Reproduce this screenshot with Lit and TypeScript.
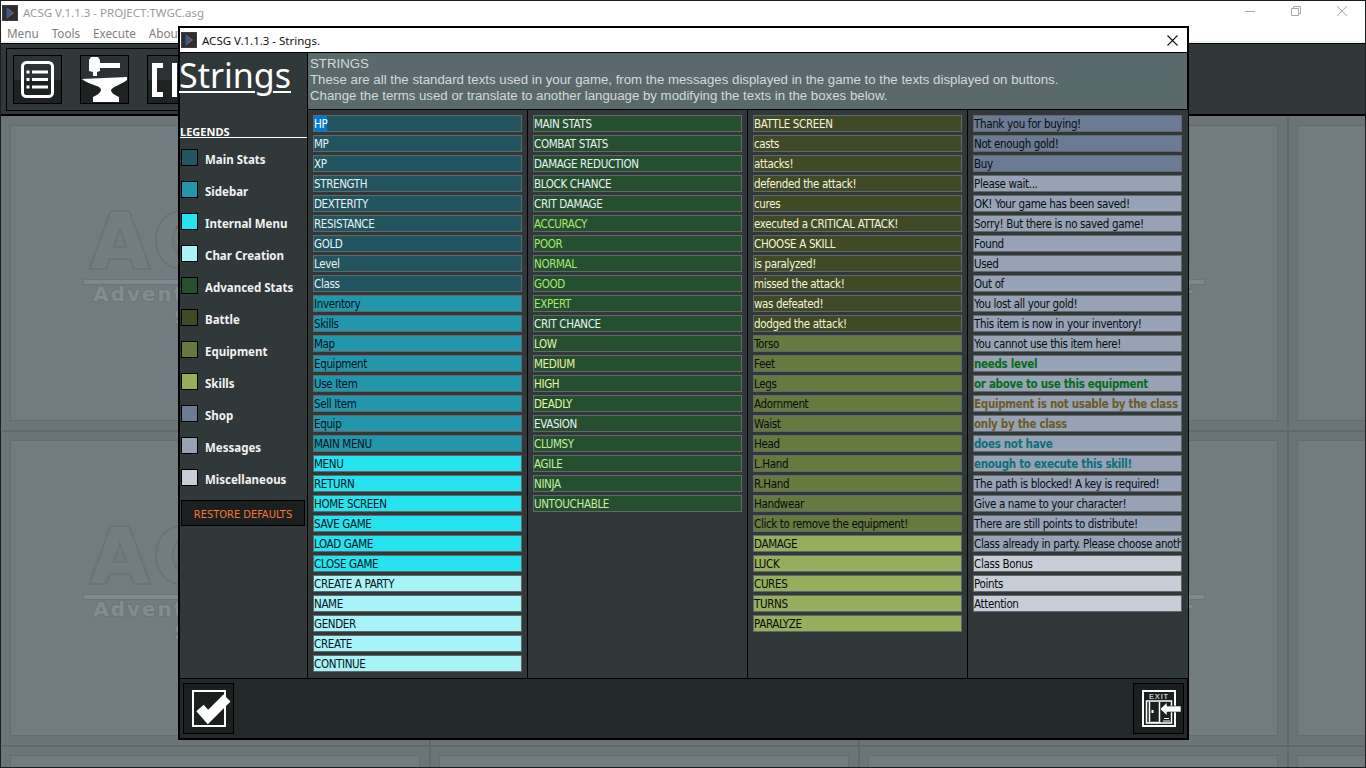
import { LitElement, html, css, svg } from "lit";
import { customElement } from "lit/decorators.js";

const C = {
  main: "#225560", side: "#2297ac", menu: "#25e3ef", char: "#a8f3f8",
  adv: "#264f30", battle: "#404a26", equip: "#66793e", skill: "#97ae5c",
  shop: "#6a7b93", msg: "#97a3b5", misc: "#c8ccd6",
};
type Row = [string, string, string, boolean?];
const W = "#e8f2f2", D = "#04131a", G = "#a6ea6e", Y = "#e2f7a8", P = "#f4f4dc", N = "#050d10";
const g = (items: string[], bg: string, fg: string, bold = false): Row[] => items.map((t) => [t, bg, fg, bold]);

const col1: Row[] = [
  ...g(["HP", "MP", "XP", "STRENGTH", "DEXTERITY", "RESISTANCE", "GOLD", "Level", "Class"], C.main, W),
  ...g(["Inventory", "Skills", "Map", "Equipment", "Use Item", "Sell Item", "Equip", "MAIN MENU"], C.side, D),
  ...g(["MENU", "RETURN", "HOME SCREEN", "SAVE GAME", "LOAD GAME", "CLOSE GAME"], C.menu, D),
  ...g(["CREATE A PARTY", "NAME", "GENDER", "CREATE", "CONTINUE"], C.char, D),
];
const col2: Row[] = [
  ...g(["MAIN STATS", "COMBAT STATS", "DAMAGE REDUCTION", "BLOCK CHANCE", "CRIT DAMAGE"], C.adv, W),
  ...g(["ACCURACY", "POOR", "NORMAL", "GOOD", "EXPERT"], C.adv, G),
  ...g(["CRIT CHANCE"], C.adv, W),
  ...g(["LOW", "MEDIUM", "HIGH", "DEADLY"], C.adv, Y),
  ...g(["EVASION"], C.adv, W),
  ...g(["CLUMSY", "AGILE", "NINJA", "UNTOUCHABLE"], C.adv, "#c4f09c"),
];
const col3: Row[] = [
  ...g(["BATTLE SCREEN", "casts", "attacks!", "defended the attack!", "cures", "executed a CRITICAL ATTACK!", "CHOOSE A SKILL", "is paralyzed!", "missed the attack!", "was defeated!", "dodged the attack!"], C.battle, P),
  ...g(["Torso", "Feet", "Legs", "Adornment", "Waist", "Head", "L.Hand", "R.Hand", "Handwear", "Click to remove the equipment!"], C.equip, N),
  ...g(["DAMAGE", "LUCK", "CURES", "TURNS", "PARALYZE"], C.skill, N),
];
const col4: Row[] = [
  ...g(["Thank you for buying!", "Not enough gold!", "Buy"], C.shop, N),
  ...g(["Please wait...", "OK! Your game has been saved!", "Sorry! But there is no saved game!", "Found", "Used", "Out of", "You lost all your gold!", "This item is now in your inventory!", "You cannot use this item here!"], C.msg, N),
  ...g(["needs level", "or above to use this equipment"], C.msg, "#056b1c", true),
  ...g(["Equipment is not usable by the class", "only by the class"], C.msg, "#6b5a26", true),
  ...g(["does not have", "enough to execute this skill!"], C.msg, "#0b7078", true),
  ...g(["The path is blocked! A key is required!", "Give a name to your character!", "There are still points to distribute!", "Class already in party. Please choose another class"], C.msg, N),
  ...g(["Class Bonus", "Points", "Attention"], C.misc, N),
];
const legends: [string, string][] = [
  ["Main Stats", C.main], ["Sidebar", C.side], ["Internal Menu", C.menu], ["Char Creation", C.char],
  ["Advanced Stats", C.adv], ["Battle", C.battle], ["Equipment", C.equip], ["Skills", C.skill],
  ["Shop", C.shop], ["Messages", C.msg], ["Miscellaneous", C.misc],
];

const appIcon = html`<svg class="appicon" viewBox="0 0 16 16" width="16" height="16">
  <rect width="16" height="16" fill="#3a3c3e"/><rect x="1" y="1" width="14" height="14" fill="#2c2e30"/>
  <path d="M5 2.5 L12 8 L5 13.5Z" fill="#b0592a"/><path d="M4.5 2.5 L10.4 8 L4.5 13.5Z" fill="#2f5aa0"/>
</svg>`;

@customElement("app-root")
export class AppRoot extends LitElement {
  static styles = css`
    :host { display: block; width: 1366px; height: 768px; position: relative; overflow: hidden; background: #6f787a; }
    * { box-sizing: border-box; }
    .window { width: 1366px; height: 768px; border: 1px solid #1c1f20; display: flex; flex-direction: column; overflow: hidden; }
    .titlebar { height: 23px; flex: none; background: #fff; display: flex; align-items: center; padding-left: 1px; color: #9a9a9a; font: 11.5px "Noto Sans", sans-serif; }
    .titlebar .appicon { margin-right: 5px; }
    .titlebar .title { flex: 1; }
    .winctl { width: 46px; height: 20px; display: flex; align-items: center; justify-content: center; margin-top: -3px; }
    .menubar { height: 19px; flex: none; background: #fff; border-bottom: 2px solid #f0f0f0; display: flex; gap: 13px; padding-left: 6px; color: #7e7e7e; font: 11.7px/18px "Noto Sans", sans-serif; }
    .toolbar { height: 73px; flex: none; background: #31383a; border-top: 1px solid #000; border-bottom: 2px solid #000; padding: 4px 5px; }
    .toolbox { width: 1000px; height: 63px; border: 1px solid #000; padding: 6px; display: flex; gap: 18px; }
    .tbtn { width: 49px; height: 49px; border: 1px solid #000; background: linear-gradient(#2c3234 0, #2c3234 50%, #1e2223 50%, #1e2223 100%); display: flex; align-items: center; justify-content: center; }
    .canvas { flex: 1; min-height: 0; padding: 1px 0 0 1px; display: grid; grid-template-columns: repeat(4, 429px); grid-auto-rows: 315px; background: #6b7476; }
    .cell { border-right: 2px solid #5f686a; border-bottom: 2px solid #5f686a; padding: 8px 9px 9px 8px; }
    .tile { height: 100%; border: 1px solid #636c6e; background: #727b7d; display: flex; flex-direction: column; align-items: center; padding-top: 85px; overflow: hidden; }
    .logo { font: 700 76px/62px "DejaVu Sans", sans-serif; letter-spacing: 4px; color: #737c7e; -webkit-text-stroke: 4px #6a7375; paint-order: stroke fill; }
    .logobar { width: 264px; height: 6px; flex: none; background: #7f888a; border: 1px solid #6b7476; margin-top: 6px; margin-bottom: -2px; }
    .logot { font: 700 20px/23px "DejaVu Sans", sans-serif; letter-spacing: 2px; color: #838c8e; -webkit-text-stroke: 2px #6c7577; paint-order: stroke fill; white-space: nowrap; }

    .dialog { position: absolute; left: 178px; top: 26px; width: 1011px; height: 714px; border: 2px solid #000; display: flex; flex-direction: column; background: #31383a; }
    .dtitle { height: 24px; flex: none; background: #fff; display: flex; align-items: center; padding-left: 1px; color: #111; font: 11.5px "Noto Sans", sans-serif; }
    .dtitle .appicon { margin-right: 5px; }
    .dtitle .title { flex: 1; }
    .dclose { width: 29px; height: 24px; display: flex; align-items: center; justify-content: center; }
    .dbody { flex: 1; min-height: 0; display: flex; border-top: 1px solid #000; }
    .sidebar { width: 128px; flex: none; border-right: 1px solid #000; background: #31383a; display: flex; flex-direction: column; }
    .bigtitle { font: 400 34px/44px "Noto Sans", sans-serif; color: #fff; text-decoration: underline; text-decoration-thickness: 2px; text-underline-offset: 3px; height: 72px; margin-left: -1px; white-space: nowrap; }
    .legendh { height: 13px; border-bottom: 1px solid #fff; color: #fff; font: 700 11px/13px "Noto Sans", sans-serif; }
    .legends { display: flex; flex-direction: column; gap: 15px; padding: 11px 0 0 1px; }
    .legend { display: flex; align-items: flex-end; gap: 7px; height: 17px; color: #f1f3f3; font: 700 11.5px/15px "Noto Sans", sans-serif; white-space: nowrap; }
    .swatch { width: 17px; height: 17px; border: 1px solid #000; flex: none; }
    .legend span { transform: translateY(1px); }
    .restore { margin: 14px 0 0 1px; width: 124px; height: 26px; background: #1b1f20; border: 1px solid #000; color: #f5763a; font: 11px/27px "DejaVu Sans Condensed", "DejaVu Sans", sans-serif; font-stretch: condensed; text-align: center; white-space: nowrap; }
    .main { flex: 1; min-width: 0; display: flex; flex-direction: column; }
    .dhead { height: 56px; flex: none; background: #5a696b; color: #d3dada; font: 13.25px/16px "Liberation Sans", Arial, sans-serif; padding: 3px 0 0 2px; white-space: nowrap; }
    .dhead div { height: 16px; }
    .cols { flex: 1; min-height: 0; display: grid; grid-template-columns: repeat(4, 220px); border-top: 1px solid #000; }
    .col { border-right: 1px solid #000; padding: 5px 0 0 5px; display: flex; flex-direction: column; gap: 3px; background: #31383a; }
    .col:last-child { border-right: 0; }
    .field { width: 209px; height: 17px; flex: none; border: 1px solid #60686a; font: 11.5px/17px "DejaVu Sans Condensed", "DejaVu Sans", sans-serif; font-stretch: condensed; letter-spacing: -0.35px; white-space: nowrap; overflow: hidden; }
    .field.b { font-weight: 700; letter-spacing: -0.3px; }
    .sel { background: #0078d7; color: #fff; display: inline-block; height: 15px; line-height: 17px; }
    .footer { height: 60px; flex: none; background: #232829; border-top: 1px solid #000; padding: 4px 3px; display: flex; justify-content: space-between; }
    .fbtn { width: 51px; height: 51px; border: 1px solid #000; background: #1b1f20; display: flex; align-items: center; justify-content: center; }
  `;

  field(r: Row, i: number, selFirst = false) {
    const [t, bg, fg, b] = r;
    return html`<div class="field ${b ? "b" : ""}" style="background:${bg};color:${fg}">${selFirst && i === 0 ? html`<span class="sel">${t}</span>` : t}</div>`;
  }

  render() {
    const cells = Array.from({ length: 12 });
    return html`
      <div class="window">
        <div class="titlebar">${appIcon}<span class="title">ACSG V.1.1.3 - PROJECT:TWGC.asg</span>
          <span class="winctl"><svg width="12" height="12" viewBox="0 0 12 12"><path d="M1 6.5H11" stroke="#a8a8a8"/></svg></span>
          <span class="winctl"><svg width="12" height="12" viewBox="0 0 12 12"><path d="M1.5 3.5H8.5V10.5H1.5Z M3.5 3.5V1.5H10.5V8.5H8.5" stroke="#a8a8a8" fill="none"/></svg></span>
          <span class="winctl"><svg width="12" height="12" viewBox="0 0 12 12"><path d="M1 1L11 11M11 1L1 11" stroke="#a8a8a8"/></svg></span>
        </div>
        <div class="menubar"><span>Menu</span><span>Tools</span><span>Execute</span><span>About</span></div>
        <div class="toolbar"><div class="toolbox">
          <div class="tbtn"><svg width="33" height="37" viewBox="0 0 33 37">
            <rect x="1.5" y="1.5" width="30" height="34" rx="4" fill="none" stroke="#fff" stroke-width="3"/>
            <path d="M11 11H27M11 18.5H27M11 26H27" stroke="#fff" stroke-width="3"/>
            <path d="M5.5 11H8.5M5.5 18.5H8.5M5.5 26H8.5" stroke="#fff" stroke-width="3"/></svg></div>
          <div class="tbtn"><svg width="47" height="47" viewBox="0 0 47 47">
            <path d="M10 1H17L19 4V7H39V12H19V15L16 16V20H12V16L8 15V4Z" fill="#fff"/>
            <path d="M1 23L46 21V24C40 29 32 30 30 34C30 37 34 39 38 41V46H12V41C16 39 20 37 20 33C18 29 8 29 1 23Z" fill="#fff"/></svg></div>
          <div class="tbtn"><svg width="47" height="47" viewBox="0 0 47 47">
            <path d="M4 7H15V12H9V36H15V41H4Z" fill="#fff"/><path d="M24 7H29V41H24Z" fill="#fff"/></svg></div>
        </div></div>
        <div class="canvas">
          ${cells.map(() => html`<div class="cell"><div class="tile">
            <div class="logo">ACSG</div><div class="logobar"></div>
            <div class="logot">Adventure Creator</div><div class="logot">Series</div>
          </div></div>`)}
        </div>
      </div>

      <div class="dialog">
        <div class="dtitle">${appIcon}<span class="title">ACSG V.1.1.3 - Strings.</span>
          <span class="dclose"><svg width="11" height="11" viewBox="0 0 11 11"><path d="M.5 .5L10.5 10.5M10.5 .5L.5 10.5" stroke="#111" stroke-width="1.1"/></svg></span>
        </div>
        <div class="dbody">
          <div class="sidebar">
            <div class="bigtitle">Strings</div>
            <div class="legendh"><u>LEGENDS</u></div>
            <div class="legends">
              ${legends.map(([t, c]) => html`<div class="legend"><div class="swatch" style="background:${c}"></div><span>${t}</span></div>`)}
            </div>
            <div class="restore">RESTORE DEFAULTS</div>
          </div>
          <div class="main">
            <div class="dhead"><div>STRINGS</div>
              <div>These are all the standard texts used in your game, from the messages displayed in the game to the texts displayed on buttons.</div>
              <div>Change the terms used or translate to another language by modifying the texts in the boxes below.</div></div>
            <div class="cols">
              <div class="col">${col1.map((r, i) => this.field(r, i, true))}</div>
              <div class="col">${col2.map((r, i) => this.field(r, i))}</div>
              <div class="col">${col3.map((r, i) => this.field(r, i))}</div>
              <div class="col">${col4.map((r, i) => this.field(r, i))}</div>
            </div>
          </div>
        </div>
        <div class="footer">
          <div class="fbtn"><svg width="49" height="49" viewBox="0 0 49 49">
            <rect x="9" y="7" width="32" height="35" fill="none" stroke="#fff" stroke-width="2"/>
            <path d="M16 24L24 33L43 14" fill="none" stroke="#fff" stroke-width="10"/></svg></div>
          <div class="fbtn"><svg width="49" height="49" viewBox="0 0 49 49">
            ${svg`<path d="M9 7H41V42H9Z" fill="none" stroke="#fff" stroke-width="2"/>
            <text x="25" y="15" fill="#fff" text-anchor="middle" font-family="Liberation Sans" font-size="7.5" letter-spacing="0.8">EXIT</text>
            <path d="M12.5 17H37.5V39H12.5Z" fill="none" stroke="#fff" stroke-width="1.5"/>
            <path d="M15.5 18V38.5H25.5V18" fill="none" stroke="#fff" stroke-width="1.5"/>
            <rect x="17.5" y="26" width="2" height="3" fill="#fff"/>
            <path d="M30 34.5H35M29 37H36" stroke="#fff" stroke-width="1"/>
            <path d="M26 25L33 18.5V22H47V28H33V31.5Z" fill="#fff" stroke="#1b1f20" stroke-width="0.6"/>`}</svg></div>
        </div>
      </div>
    `;
  }
}
